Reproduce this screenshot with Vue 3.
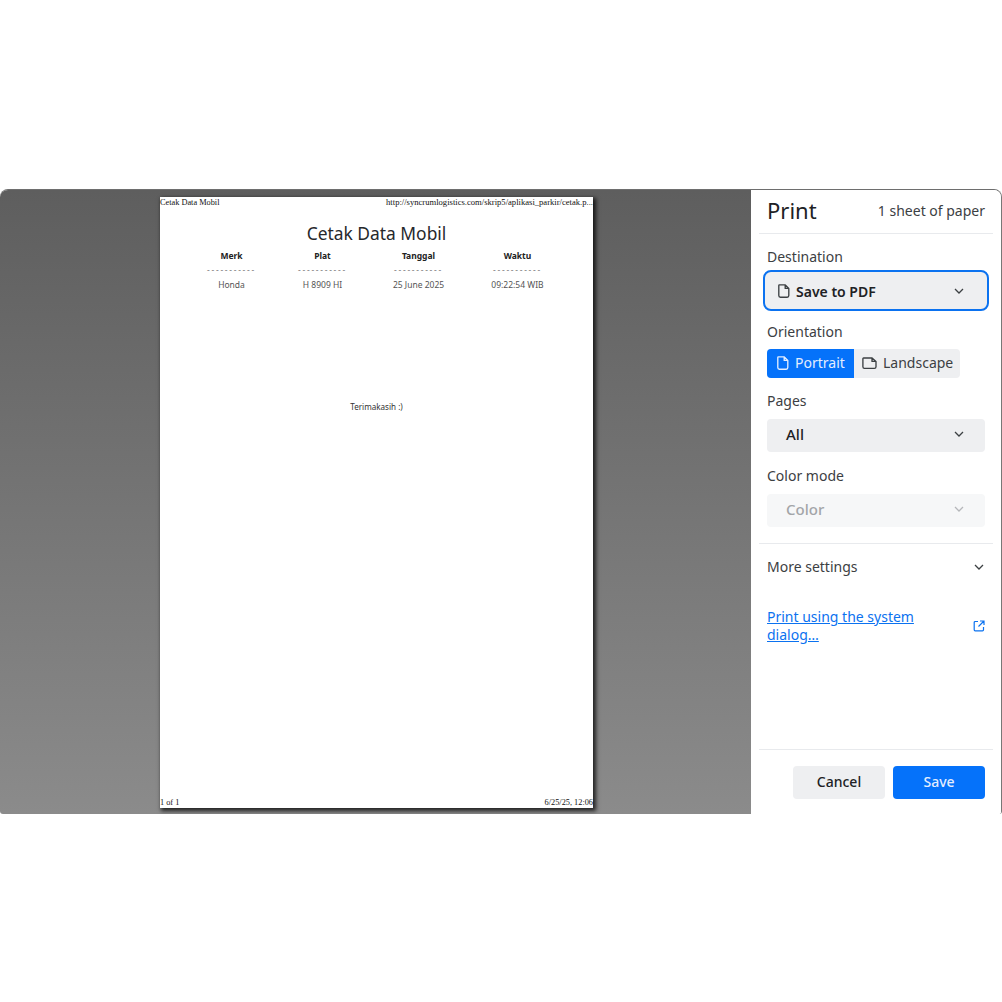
<script setup>
const columns = [
  { head: 'Merk', value: 'Honda' },
  { head: 'Plat', value: 'H 8909 HI' },
  { head: 'Tanggal', value: '25 June 2025' },
  { head: 'Waktu', value: '09:22:54 WIB' },
]
</script>

<template>
  <div class="page">
    <div class="window">
      <main class="preview">
        <article class="paper">
          <header class="paper-head">
            <span>Cetak Data Mobil</span>
            <span class="url">http://syncrumlogistics.com/skrip5/aplikasi_parkir/cetak.p...</span>
          </header>
          <h1 class="doc-title">Cetak Data Mobil</h1>
          <div class="doc-table">
            <div v-for="c in columns" :key="c.head" class="doc-col">
              <b class="doc-head">{{ c.head }}</b>
              <span class="doc-dash">-----------</span>
              <span class="doc-val">{{ c.value }}</span>
            </div>
          </div>
          <p class="thanks">Terimakasih :)</p>
          <footer class="paper-foot">
            <span>1 of 1</span>
            <span>6/25/25, 12:06</span>
          </footer>
        </article>
      </main>

      <aside class="panel">
        <div class="panel-head">
          <span class="print-title">Print</span>
          <span class="sheets">1 sheet of paper</span>
        </div>

        <div class="settings">
          <div class="label first">Destination</div>
          <div class="select dest">
            <svg class="doc-icon" viewBox="0 0 14 14" width="14" height="14"><path d="M2.4.9h5.9l3.5 3.5v7.2a1.6 1.6 0 0 1-1.6 1.6H3.4a1.6 1.6 0 0 1-1.6-1.6V1.5A.6.6 0 0 1 2.4.9zM8.2 1v3.4h3.5" fill="none" stroke="currentColor" stroke-width="1.35" stroke-linejoin="round"/></svg>
            <span class="dest-text">Save to PDF</span>
            <svg class="chev" viewBox="0 0 10 6" width="10" height="6"><path d="M1 1l4 4 4-4" fill="none" stroke="currentColor" stroke-width="1.3"/></svg>
          </div>

          <div class="label orient">Orientation</div>
          <div class="toggle">
            <div class="tog active">
              <svg viewBox="0 0 14 14" width="14" height="14"><path d="M2.4.9h5.9l3.5 3.5v7.2a1.6 1.6 0 0 1-1.6 1.6H3.4a1.6 1.6 0 0 1-1.6-1.6V1.5A.6.6 0 0 1 2.4.9zM8.2 1v3.4h3.5" fill="none" stroke="currentColor" stroke-width="1.35" stroke-linejoin="round"/></svg>
              Portrait
            </div>
            <div class="tog">
              <svg viewBox="0 0 15 14" width="15" height="14"><path d="M1.5 2h8.6l3.9 3.4v5.4a1.6 1.6 0 0 1-1.6 1.6H2.5A1.6 1.6 0 0 1 .9 10.8V2.6A.6.6 0 0 1 1.5 2zM10 2.1v3.3h4" fill="none" stroke="currentColor" stroke-width="1.35" stroke-linejoin="round"/></svg>
              Landscape
            </div>
          </div>

          <div class="label pages">Pages</div>
          <div class="select plain">
            <span>All</span>
            <svg class="chev" viewBox="0 0 10 6" width="10" height="6"><path d="M1 1l4 4 4-4" fill="none" stroke="currentColor" stroke-width="1.3"/></svg>
          </div>

          <div class="label color">Color mode</div>
          <div class="select plain disabled">
            <span>Color</span>
            <svg class="chev" viewBox="0 0 10 6" width="10" height="6"><path d="M1 1l4 4 4-4" fill="none" stroke="currentColor" stroke-width="1.3"/></svg>
          </div>
        </div>

        <div class="more">
          <span>More settings</span>
          <svg class="chev" viewBox="0 0 10 6" width="10" height="6"><path d="M1 1l4 4 4-4" fill="none" stroke="currentColor" stroke-width="1.3"/></svg>
        </div>

        <div class="system">
          <a class="sys-link">Print using the system dialog…</a>
          <svg viewBox="0 0 12 12" width="12" height="12" class="ext"><path d="M5 1.5H2.2a1 1 0 0 0-1 1v7.3a1 1 0 0 0 1 1h7.3a1 1 0 0 0 1-1V7M7 1h4v4M11 1L5.5 6.5" fill="none" stroke="currentColor" stroke-width="1.2"/></svg>
        </div>

        <div class="actions">
          <button class="btn cancel">Cancel</button>
          <button class="btn save">Save</button>
        </div>
      </aside>
    </div>
  </div>
</template>

<style>
html, body { margin: 0; background: #fff; }
</style>

<style scoped>
.page {
  width: 1002px;
  height: 1002px;
  padding-top: 189px;
  box-sizing: border-box;
  background: #fff;
  font-family: "Noto Sans", "Open Sans", sans-serif;
  color: #202124;
}
.window {
  display: flex;
  height: 625px;
  box-sizing: border-box;
  border-top: 1px solid #6e6e6e;
  border-right: 1px solid #777;
  border-radius: 8px 8px 3px 3px;
  overflow: hidden;
}
.preview {
  width: 751px;
  flex: none;
  padding: 7px 0 0 160px;
  box-sizing: border-box;
  background: linear-gradient(#5e5e5e, #8b8b8b);
}
.paper {
  width: 433px;
  height: 611px;
  background: #fff;
  display: flex;
  flex-direction: column;
  box-shadow: 2px 2px 4px 1px rgba(0, 0, 0, .75);
}
.paper-head, .paper-foot {
  display: flex;
  justify-content: space-between;
  font: 8.3px/11px "Liberation Serif", serif;
  color: #111;
  white-space: nowrap;
}
.url { font-size: 8.6px; }
.doc-title {
  margin: 13px 0 0;
  text-align: center;
  font-size: 17.4px;
  line-height: 24px;
  font-weight: 400;
  color: #26282b;
}
.doc-table {
  display: grid;
  grid-template-columns: 91px 91px 101px 97px;
  margin: 5px 0 0 26px;
}
.doc-col {
  display: flex;
  flex-direction: column;
  align-items: center;
  font-size: 8.5px;
}
.doc-head { line-height: 12px; font-size: 8.5px; color: #222; }
.doc-dash { line-height: 12px; margin-top: 2px; letter-spacing: 1.7px; color: #777; }
.doc-val { line-height: 12px; margin-top: 3px; color: #555; }
.thanks {
  margin: 110px 0 0;
  text-align: center;
  font-size: 8.1px;
  line-height: 12px;
  color: #333;
}
.paper-foot { margin-top: auto; }

.panel {
  flex: 1;
  min-width: 0;
  background: #fff;
  display: flex;
  flex-direction: column;
  padding: 0 8px;
}
.panel-head {
  height: 43px;
  flex: none;
  display: flex;
  justify-content: space-between;
  align-items: center;
  padding: 0 8px;
  border-bottom: 1.5px solid #e8eaed;
}
.print-title { font-size: 22px; line-height: 28px; color: #202124; margin-bottom: 4px; }
.sheets { font-size: 14px; color: #3c4043; margin-bottom: 2px; }
.settings {
  padding: 0 8px 16px;
  border-bottom: 1.5px solid #e8eaed;
}
.label {
  font-size: 14px;
  line-height: 18px;
  color: #3c4043;
}
.label.first { margin-top: 14px; }
.label.orient { margin-top: 12px; }
.label.pages { margin-top: 14px; }
.label.color { margin-top: 15px; }
.select {
  display: flex;
  align-items: center;
  background: #eeeff1;
  border-radius: 4px;
  font-size: 15px;
  font-weight: 500;
  color: #202124;
}
.dest {
  height: 41px;
  margin: 4px -4px 0;
  box-sizing: border-box;
  border: 2px solid #0b72f0;
  border-radius: 8px;
  padding: 1px 23px 0 12px;
  gap: 5px;
  font-size: 14px;
  font-weight: 600;
}
.dest-text { flex: 1; }
.doc-icon { flex: none; color: #3c4043; }
.chev { flex: none; color: #3c4043; }
.plain {
  height: 33px;
  margin-top: 9px;
  box-sizing: border-box;
  padding: 0 21px 3px 19px;
  justify-content: space-between;
}
.disabled { background: #f6f7f8; color: #a3a5a8; }
.disabled .chev { color: #b5b7ba; }
.toggle {
  display: flex;
  margin-top: 8px;
  width: 193px;
  height: 29px;
  background: #eeeff1;
  border-radius: 4px;
  overflow: hidden;
}
.tog {
  display: flex;
  flex: none;
  align-items: center;
  gap: 6px;
  padding: 0 8px 2px;
  font-size: 14px;
  color: #3c4043;
  white-space: nowrap;
  box-sizing: border-box;
}
.tog.active {
  width: 87px;
  gap: 5px;
  padding-left: 9px;
  background: #0572fa;
  color: #e4eeff;
}
.more {
  display: flex;
  justify-content: space-between;
  align-items: center;
  padding: 14px 9px 0 8px;
  line-height: 18px;
  font-size: 14px;
  color: #3c4043;
}
.system {
  display: flex;
  align-items: center;
  justify-content: space-between;
  padding: 0 8px;
  margin-top: 32px;
  color: #0b72f0;
}
.sys-link {
  width: 170px;
  font-size: 14px;
  line-height: 18px;
  text-decoration: underline;
}
.ext { flex: none; }
.actions {
  margin-top: auto;
  height: 65px;
  box-sizing: border-box;
  border-top: 1.5px solid #e8eaed;
  display: flex;
  justify-content: flex-end;
  gap: 8px;
  padding: 16px 8px 0;
}
.btn {
  height: 33px;
  border: 0;
  border-radius: 4px;
  font: 500 14px "Noto Sans", sans-serif;
  padding: 0 0 2px;
}
.cancel { width: 92px; background: #eeeff1; color: #202124; }
.save { width: 92px; background: #0572fa; color: #e4eeff; }
</style>
